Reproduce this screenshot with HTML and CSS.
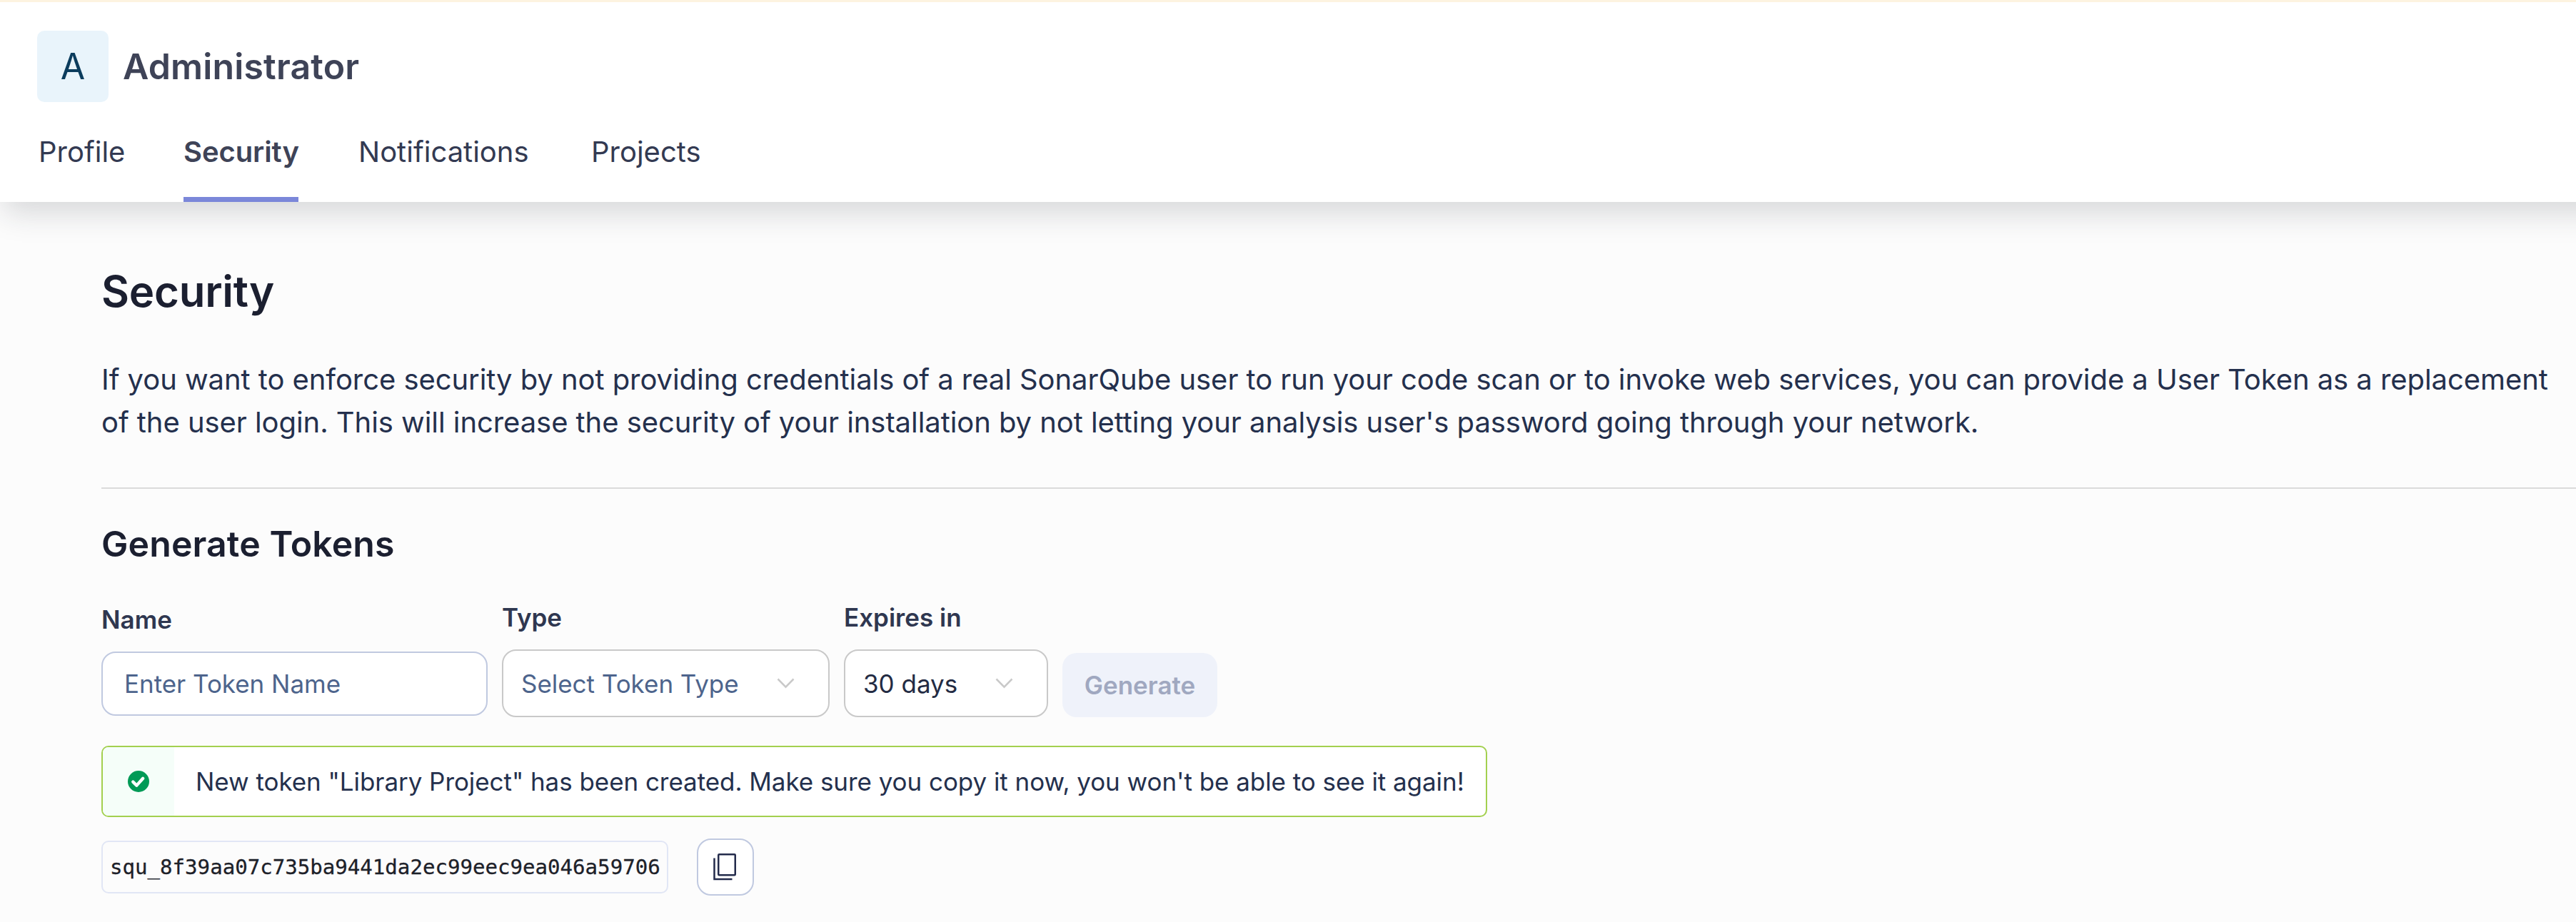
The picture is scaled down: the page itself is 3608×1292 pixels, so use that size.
FILE: index.html
```
<!DOCTYPE html>
<html lang="en">
<head>
<meta charset="utf-8">
<title>Security</title>
<link rel="stylesheet" href="styles.css">
</head>
<body>
<header class="header">
  <div class="user">
    <div class="avatar">A</div>
    <div class="user-name">Administrator</div>
  </div>
  <nav class="tabs">
    <a class="tab">Profile</a>
    <a class="tab active">Security</a>
    <a class="tab">Notifications</a>
    <a class="tab">Projects</a>
  </nav>
</header>
<main class="main">
  <h1 class="title">Security</h1>
  <p class="intro"><span class="line">If you want to enforce security by not providing credentials of a real SonarQube user to run your code scan or to invoke web services, you can provide a User Token as a replacement</span> <span class="line">of the user login. This will increase the security of your installation by not letting your analysis user's password going through your network.</span></p>
  <hr class="rule">
  <h2 class="subtitle">Generate Tokens</h2>
  <form class="form">
    <div class="field field-name">
      <label class="label">Name</label>
      <div class="input"><span class="placeholder">Enter Token Name</span></div>
    </div>
    <div class="field field-type">
      <label class="label">Type</label>
      <div class="select"><span class="placeholder">Select Token Type</span>
        <svg class="chevron" viewBox="0 0 25 15"><path d="M1.5 1.5 L12.5 12.7 L23.5 1.5"/></svg></div>
    </div>
    <div class="field field-expires">
      <label class="label">Expires in</label>
      <div class="select"><span class="value">30 days</span>
        <svg class="chevron" viewBox="0 0 25 15"><path d="M1.5 1.5 L12.5 12.7 L23.5 1.5"/></svg></div>
    </div>
    <button class="generate" type="button" disabled>Generate</button>
  </form>
  <div class="alert">
    <div class="alert-icon">
      <svg viewBox="0 0 30 30" width="30" height="30"><circle cx="15" cy="15" r="15" fill="#009a56"/><path d="M7.3 15.6 L12.4 20.6 L21.2 10.8" fill="none" stroke="#fff" stroke-width="4.4" stroke-linecap="round" stroke-linejoin="round"/></svg>
    </div>
    <div class="alert-text">New token "Library Project" has been created. Make sure you copy it now, you won't be able to see it again!</div>
  </div>
  <div class="token-row">
    <code class="token">squ_8f39aa07c735ba9441da2ec99eec9ea046a59706</code>
    <button class="copy" type="button">
      <svg class="copy-icon" viewBox="0 0 32 38" width="32" height="38"><rect x="7.25" y="1.25" width="23.5" height="29" rx="1"/><path d="M1.5 6.5 V36 H26.5"/></svg>
    </button>
  </div>
</main>
</body>
</html>
```
FILE: styles.css
```
* { box-sizing: border-box; }
body {
  margin: 0;
  height: 1292px;
  overflow: hidden;
  background: #fcfcfc;
  color: #24304d;
  font-family: Inter, "Liberation Sans", sans-serif;
  font-size: 40px;
}
.header {
  height: 283px;
  margin-right: -80px;
  padding: 40px 52px 0;
  border-top: 3px solid #fdf3e0;
  background: #fff;
  box-shadow: 0 20px 40px -5px rgba(29, 33, 47, 0.17);
}
.user { display: flex; align-items: center; gap: 20px; height: 100px; }
.avatar {
  width: 100px;
  height: 100px;
  border-radius: 10px;
  background: #e9f4fb;
  color: #0b3c5d;
  font-size: 50px;
  line-height: 100px;
  text-align: center;
}
.user-name { color: #3e4357; font-size: 50px; font-weight: 600; letter-spacing: 0.15px; }
.tabs {
  display: grid;
  grid-template-columns: 203px 245px 326px auto;
  justify-items: start;
  margin-top: 36px;
  padding-left: 2px;
  color: #333a52;
}
.tab { height: 104px; line-height: 67px; white-space: nowrap; }
.tab.active {
  width: 161px;
  border-bottom: 7px solid #7b87d9;
  color: #3e4357;
  font-weight: 600;
  letter-spacing: -0.1px;
}
.main { padding: 85px 0 0 142px; }
.title { margin: 0; color: #1b1f30; font-size: 60px; font-weight: 600; line-height: 80px; letter-spacing: -0.25px; }
.intro { margin: 54px 0 0; line-height: 60px; letter-spacing: -0.064px; }
.line { display: block; width: max-content; white-space: nowrap; }
.rule { height: 2px; margin: 61px 0 0; border: 0; background: #dbdbdb; }
.subtitle { margin: 47px 0 0; color: #1b1f30; font-size: 50px; font-weight: 600; line-height: 60px; letter-spacing: 0.1px; }
.form { display: flex; align-items: flex-start; gap: 20px; margin: 45px 0 0; height: 168px; font-size: 35px; }
.field { display: flex; flex-direction: column; gap: 25px; }
.field-name { width: 541px; padding-top: 6px; }
.field-type { width: 459px; padding-top: 3px; }
.field-expires { width: 286px; padding-top: 3px; }
.label { height: 45px; color: #2f3750; font-weight: 600; line-height: 50px; }
.input, .select {
  display: flex;
  align-items: center;
  border: 2px solid #c9c9c9;
  border-radius: 20px;
  background: #fff;
}
.input { height: 90px; padding: 0 30px; border-color: #c0c9e0; }
.select { justify-content: space-between; height: 95px; padding: 0 47px 0 25px; }
.placeholder { color: #4d648c; letter-spacing: -0.03px; white-space: nowrap; }
.value { color: #232b43; }
.chevron { width: 25px; height: 15px; fill: none; stroke: #c9c9c9; stroke-width: 2.5; }
.generate {
  width: 217px;
  height: 90px;
  margin-top: 78px;
  padding: 0;
  border: 0;
  border-radius: 20px;
  background: #eff2fa;
  color: #a0a8c0;
  font: 600 35px Inter, sans-serif;
}
.alert {
  display: flex;
  width: 1941px;
  height: 100px;
  margin-top: 40px;
  overflow: hidden;
  border: 2px solid #a3d04f;
  border-radius: 10px;
  background: #fff;
}
.alert-icon { display: flex; align-items: center; justify-content: center; width: 100px; background: #f5fef9; }
.alert-text { margin-left: 30px; font-size: 35px; line-height: 96px; letter-spacing: -0.056px; white-space: nowrap; }
.token-row { display: flex; align-items: center; gap: 40px; margin-top: 30px; }
.token {
  width: 794px;
  height: 74px;
  padding-left: 10px;
  border: 2px solid #e1e6f5;
  border-radius: 10px;
  color: #1d2129;
  font: 29.1px/70px "DejaVu Sans Mono", monospace;
  -webkit-text-stroke: 0.3px #1d2129;
  white-space: nowrap;
}
.copy {
  display: flex;
  align-items: center;
  justify-content: center;
  width: 80px;
  height: 80px;
  padding: 0;
  border: 2px solid #c0c9e0;
  border-radius: 20px;
  background: #fff;
}
.copy-icon { margin-right: 2px; fill: none; stroke: #232b4b; stroke-width: 2.5; }
```
